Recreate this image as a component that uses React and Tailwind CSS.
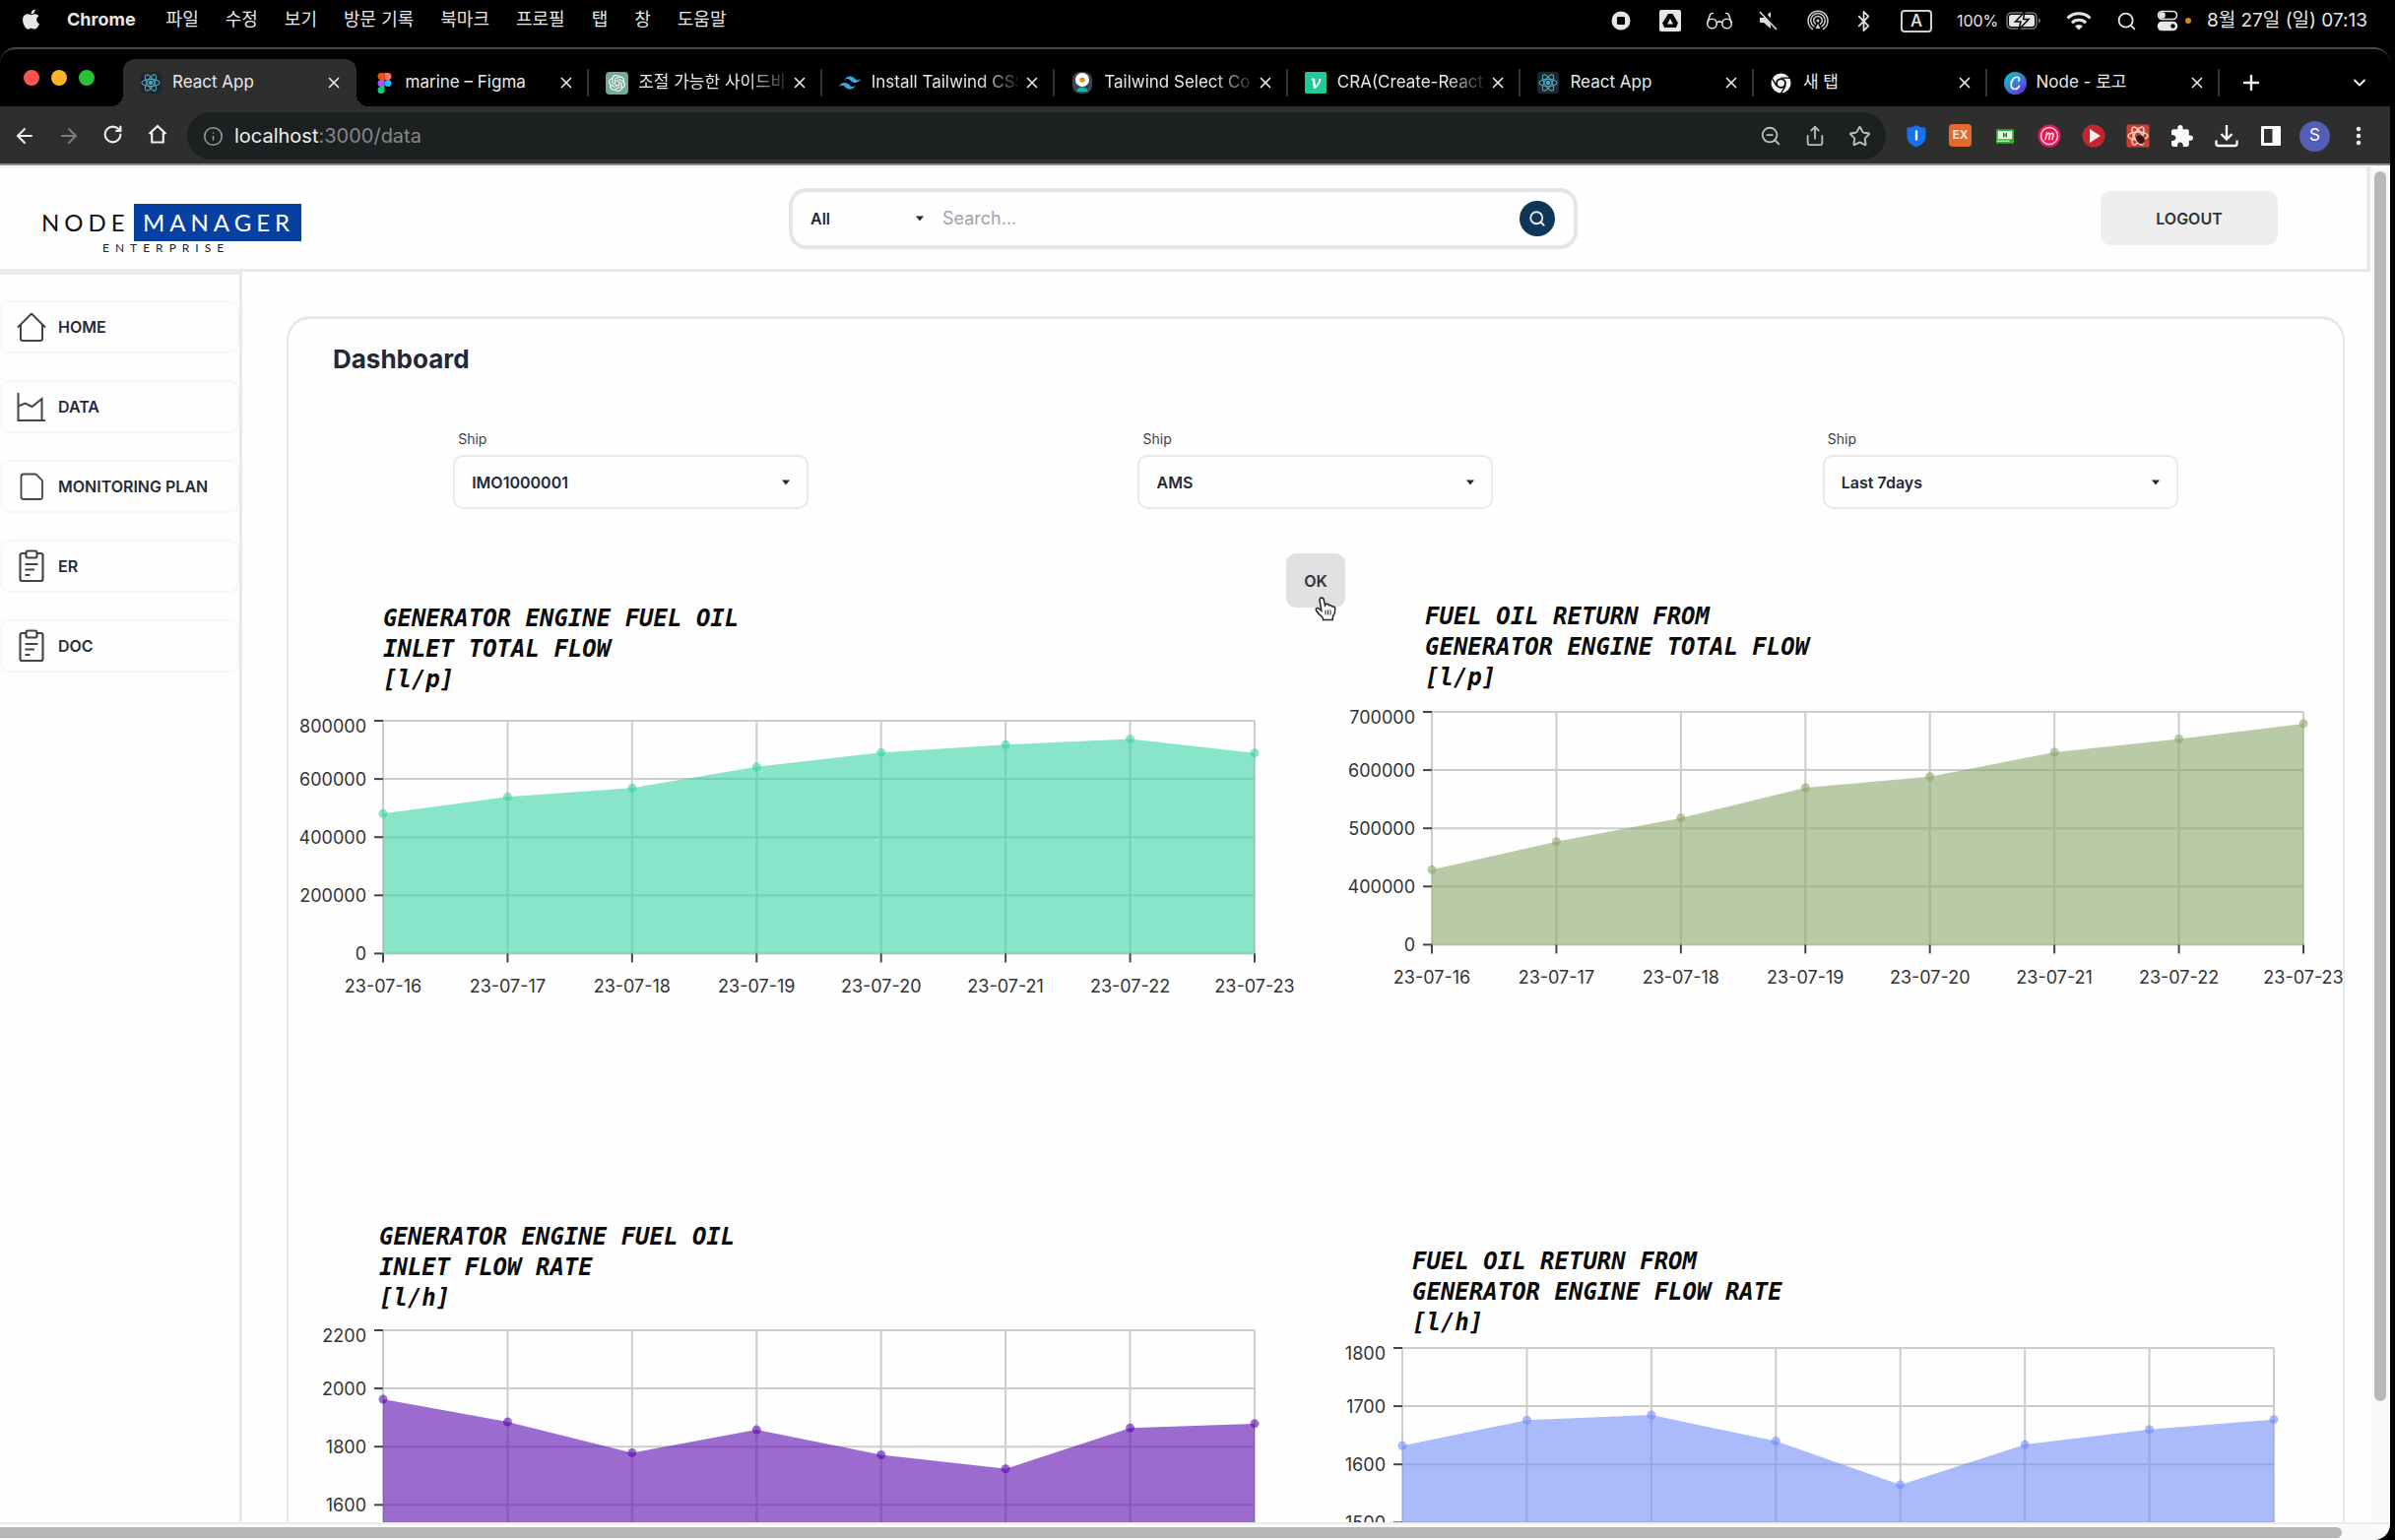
import React from "react";
import {
  ArrowLeft, ArrowRight, Bluetooth, ChevronDown, EllipsisVertical, Info,
  Plus, RotateCw, Search, Share, Star, X, ZoomOut,
} from "lucide-react";
import { FaApple } from "react-icons/fa";
import { SiOpenai, SiTailwindcss } from "react-icons/si";
import { MdExtension } from "react-icons/md";

const MENUS = ["파일", "수정", "보기", "방문 기록", "북마크", "프로필", "탭", "창", "도움말"];

const DATES = ["23-07-16", "23-07-17", "23-07-18", "23-07-19", "23-07-20", "23-07-21", "23-07-22", "23-07-23"];

/* ---------- favicons ---------- */

function ReactIcon() {
  return (
    <svg viewBox="0 0 24 24" className="size-[22px] rounded-sm bg-[#20262c]" fill="none" stroke="#4fa3bd" strokeWidth="1.2">
      <circle cx="12" cy="12" r="1.8" fill="#4fa3bd" />
      <ellipse cx="12" cy="12" rx="10" ry="4" />
      <ellipse cx="12" cy="12" rx="10" ry="4" transform="rotate(60 12 12)" />
      <ellipse cx="12" cy="12" rx="10" ry="4" transform="rotate(120 12 12)" />
    </svg>
  );
}

function FigmaIcon() {
  return (
    <svg viewBox="0 0 22 22" className="size-[22px]">
      <path d="M8 1h3.500v7H8a3.500 3.500 0 0 1 0-7z" fill="#f24e1e" />
      <path d="M11.500 1H15a3.500 3.500 0 0 1 0 7h-3.500z" fill="#ff7262" />
      <path d="M8 8h3.500v7H8a3.500 3.500 0 0 1 0-7z" fill="#a259ff" />
      <circle cx="15" cy="11.500" r="3.500" fill="#1abcfe" />
      <path d="M8 15h3.500v3.500A3.500 3.500 0 1 1 8 15z" fill="#0acf83" />
    </svg>
  );
}

function OpenAiIcon() {
  return (
    <span className="flex size-[23px] items-center justify-center rounded bg-[#75a99c] text-white">
      <SiOpenai size={17} />
    </span>
  );
}

function PenguinIcon() {
  return (
    <svg viewBox="0 0 22 24" className="h-6 w-[22px]">
      <rect x="1" y="1" width="20" height="22" rx="8" fill="#3a4656" />
      <circle cx="11" cy="9" r="7" fill="#fff" />
      <circle cx="11" cy="9" r="2.600" fill="#e28a1c" />
      <path d="M5.500 21c0-6 11-6 11 0z" fill="#14b8a6" />
    </svg>
  );
}

function VelogIcon() {
  return (
    <svg viewBox="0 0 22 22" className="size-[22px]">
      <rect width="22" height="22" rx="2" fill="#20c997" />
      <path d="M7 6.500h3l1 8c2-2.500 3.300-4.800 3-6.800l2-1.200c1.200 3-2 7-5.200 10.500H9L7.800 8.500H6.500z" fill="#fff" />
    </svg>
  );
}

function ChromeIcon() {
  return (
    <svg viewBox="0 0 22 22" className="size-[21px]">
      <circle cx="11" cy="11" r="10.500" fill="#f4f4f4" />
      <circle cx="11" cy="11" r="5.600" fill="#000" />
      <path d="M11 5.400h9.500M6.200 13.800 1.500 5.800M15.800 13.800l-4.800 8" stroke="#000" strokeWidth="1.400" />
      <circle cx="11" cy="11" r="3.700" fill="#f4f4f4" />
    </svg>
  );
}

function CanvaIcon() {
  return (
    <svg viewBox="0 0 24 24" className="size-[23px]">
      <defs>
        <linearGradient id="canva" x1="0.100" y1="0.200" x2="0.800" y2="1">
          <stop offset="0" stopColor="#12b8c4" />
          <stop offset="0.550" stopColor="#3f74da" />
          <stop offset="1" stopColor="#6a22dd" />
        </linearGradient>
      </defs>
      <circle cx="12" cy="12" r="12" fill="url(#canva)" />
      <path d="M15.500 9.500c1.500-2 .3-4-1.800-4C10 5.500 7.500 9.500 7.500 13.300c0 3 1.500 5 4 5 2 0 3.700-1.300 4.700-3.300" fill="none" stroke="#fff" strokeWidth="1.700" strokeLinecap="round" />
    </svg>
  );
}

const TABS = [
  { title: "React App", icon: <ReactIcon />, active: true },
  { title: "marine – Figma", icon: <FigmaIcon /> },
  { title: "조절 가능한 사이드바", icon: <OpenAiIcon />, fade: true },
  { title: "Install Tailwind CSS", icon: <SiTailwindcss size={22} color="#38a8e0" />, fade: true },
  { title: "Tailwind Select Co", icon: <PenguinIcon />, fade: true },
  { title: "CRA(Create-React", icon: <VelogIcon />, fade: true },
  { title: "React App", icon: <ReactIcon /> },
  { title: "새 탭", icon: <ChromeIcon /> },
  { title: "Node - 로고", icon: <CanvaIcon /> },
];

/* ---------- system menu bar ---------- */

function MenuBar() {
  return (
    <header className="flex h-12 shrink-0 items-start bg-black text-[18px] leading-10 text-[#e6e6e6]">
      <FaApple size={23} className="mt-2 ml-5" />
      <nav className="ml-[25px] flex gap-[27px]">
        <span className="mr-1 font-bold">Chrome</span>
        {MENUS.map((m) => <span key={m}>{m}</span>)}
      </nav>
      <div className="ml-auto flex h-[42px] items-center">
        <span className="flex w-[50px] justify-center">
          <svg viewBox="0 0 20 20" className="size-5"><circle cx="10" cy="10" r="9.500" fill="#e6e6e6" /><rect x="6" y="6" width="8" height="8" rx="1" fill="#000" /></svg>
        </span>
        <span className="flex w-[50px] justify-center">
          <svg viewBox="0 0 24 24" className="size-6"><rect x="1" y="1" width="22" height="22" rx="2" fill="#e6e6e6" /><path d="M10 5h4.500l5.500 9.500-2.200 4.500H6.200L4 14.500z" fill="#000" /><path d="m12 10 3 5.500H9z" fill="#e6e6e6" /></svg>
        </span>
        <span className="flex w-[50px] justify-center">
          <svg viewBox="0 0 28 20" className="h-5 w-7" fill="none" stroke="#dcdcdc" strokeWidth="1.600" strokeLinecap="round">
            <circle cx="6.500" cy="13" r="4.800" /><circle cx="21.500" cy="13" r="4.800" />
            <path d="M11.300 12c1.500-1.300 3.900-1.300 5.400 0M2 11.500 4.500 4q.7-1.800 2.800-1.500M26 11.500 23.500 4q-.7-1.800-2.800-1.500" />
          </svg>
        </span>
        <span className="flex w-[50px] justify-center">
          <svg viewBox="0 0 22 22" className="size-[22px]"><path d="M2 8h4l7-6v17l-7-6H2z" fill="#dcdcdc" /><path d="m4 1 16 19" stroke="#000" strokeWidth="4" /><path d="m2 2 17 18" stroke="#dcdcdc" strokeWidth="1.600" /></svg>
        </span>
        <span className="flex w-[50px] justify-center">
          <svg viewBox="0 0 24 24" className="size-6" fill="none" stroke="#cfcfcf" strokeWidth="1.500" strokeLinecap="round">
            <path d="M6.500 20.500a10 10 0 1 1 11 0M8 17.800a7.300 7.300 0 1 1 8 0M9.500 15.200a4.300 4.300 0 1 1 5 0" />
            <circle cx="12" cy="12" r="1.500" fill="#cfcfcf" stroke="none" />
            <path d="m12 15 2.500 5h-5z" fill="#cfcfcf" stroke="none" />
          </svg>
        </span>
        <span className="flex w-11 justify-center"><Bluetooth size={23} strokeWidth={1.8} /></span>
        <span className="flex w-[62px] justify-center">
          <span className="flex h-[23px] w-8 items-center justify-center rounded-[4px] border-2 border-[#cfcfcf] text-[17px] leading-none font-medium">A</span>
        </span>
        <span className="ml-2.5 w-[50px] text-[16px]">100%</span>
        <svg viewBox="0 0 36 18" className="h-[18px] w-9">
          <rect x="1" y="1" width="30" height="16" rx="4.500" fill="none" stroke="#777" strokeWidth="1.500" />
          <rect x="3" y="3" width="26" height="12" rx="2.500" fill="#e6e6e6" />
          <path d="M33 6.500v5q2-.8 2-2.500t-2-2.500z" fill="#777" />
          <path d="M19 0 9.500 10H15l-2 8 10-10.500h-5.500z" fill="#e6e6e6" stroke="#000" strokeWidth="1.500" />
        </svg>
        <span className="flex w-[76px] justify-center">
          <svg viewBox="0 0 26 20" className="h-5 w-[26px]" fill="none" stroke="#e6e6e6" strokeWidth="3">
            <path d="M1.500 7.500a16.500 16.500 0 0 1 23 0M6 12.200a10 10 0 0 1 14 0" />
            <path d="M9 15.500a5.800 5.800 0 0 1 8 0L13 19.500z" fill="#e6e6e6" stroke="none" />
          </svg>
        </span>
        <Search size={21} strokeWidth={2} />
        <svg viewBox="0 0 22 22" className="ml-5 size-[22px]" fill="none" stroke="#e6e6e6" strokeWidth="1.600">
          <rect x="1.500" y="1.500" width="19" height="8" rx="4" /><circle cx="5.500" cy="5.500" r="2.500" fill="#e6e6e6" />
          <rect x="1.500" y="12.500" width="19" height="8" rx="4" fill="#e6e6e6" /><circle cx="16.500" cy="16.500" r="2.200" fill="#000" stroke="none" />
        </svg>
        <span className="ml-[7px] size-1.5 rounded-full bg-[#d8841c]" />
        <time className="mr-7 ml-4 text-right text-[19px]">8월 27일 (일) 07:13</time>
      </div>
    </header>
  );
}

/* ---------- browser chrome ---------- */

function TabStrip() {
  return (
    <div className="flex h-[58px] items-end">
      <div className="flex w-[125px] shrink-0 gap-3 self-start pt-[21px] pl-6">
        <span className="size-4 rounded-full bg-[#ff554d]" />
        <span className="size-4 rounded-full bg-[#fdb429]" />
        <span className="size-4 rounded-full bg-[#28c232]" />
      </div>
      {TABS.map((t, i) => (
        <div
          key={i}
          className={
            "relative flex h-12 min-w-0 flex-1 items-center pr-3.5 pl-[17px] text-[17px] text-[#e8e8e8] " +
            (t.active ? "rounded-t-xl bg-[#2e2e2e]" : "")
          }
        >
          {t.active && (
            <>
              <span className="absolute bottom-0 -left-3 h-3 w-3 bg-[radial-gradient(circle_at_0_0,transparent_12px,#2e2e2e_12px)]" />
              <span className="absolute -right-3 bottom-0 h-3 w-3 bg-[radial-gradient(circle_at_100%_0,transparent_12px,#2e2e2e_12px)]" />
            </>
          )}
          <span className="flex w-6 shrink-0 items-center">{t.icon}</span>
          <span
            className={
              "ml-[9px] min-w-0 flex-1 overflow-hidden whitespace-nowrap " +
              (t.fade ? "[mask-image:linear-gradient(to_right,black_75%,transparent_105%)]" : "")
            }
          >
            {t.title}
          </span>
          <button type="button" aria-label="Close tab" className="ml-1.5"><X size={18} strokeWidth={2.2} /></button>
          {i > 0 && <span className="absolute top-2.5 right-0 h-7 w-0.5 bg-[#333]" />}
        </div>
      ))}
      <div className="flex h-12 w-[173px] shrink-0 items-center justify-between pr-[21px] pl-5 text-[#eee]">
        <button type="button" aria-label="New tab"><Plus size={24} strokeWidth={2.4} /></button>
        <button type="button" aria-label="Search tabs"><ChevronDown size={20} strokeWidth={2.4} /></button>
      </div>
    </div>
  );
}

function Extensions() {
  return (
    <div className="flex">
      <span className="flex w-[45px] justify-center">
        <svg viewBox="0 0 22 24" className="h-6 w-[22px]"><path d="M11 1c3 2 6 2.500 9.500 2.500V13c0 5-4 8-9.500 10.500C5.500 21 1.500 18 1.500 13V3.500C5 3.500 8 3 11 1z" fill="#1571ee" /><rect x="9.800" y="6.500" width="2.400" height="10" fill="#fff" /></svg>
      </span>
      <span className="flex w-[45px] justify-center">
        <span className="flex size-[23px] items-center justify-center rounded bg-[#e8682a] text-[12px] font-bold text-[#f6e3d8]">EX</span>
      </span>
      <span className="flex w-[45px] items-center justify-center">
        <svg viewBox="0 0 20 16" className="h-[15px] w-[18px]"><rect width="20" height="16" rx="1" fill="#2cb52c" /><rect x="2" y="2" width="16" height="9" fill="#e9f8e4" /><path d="M8.500 4v5M11.500 4v5M8 6.500h4" stroke="#1c7a1c" strokeWidth="1.500" /><rect x="1" y="12.500" width="14" height="1.500" fill="#b8f0b0" /></svg>
      </span>
      <span className="flex w-[45px] justify-center">
        <svg viewBox="0 0 24 24" className="size-6"><circle cx="12" cy="12" r="11.500" fill="#ea1650" /><circle cx="12" cy="12" r="8.500" fill="none" stroke="#ffd5e0" strokeWidth="1.500" /><path d="M8 15.500 9.500 9M9 11.500c1.500-3 4-2.500 3.500 0l-.8 4M12.500 11c1.500-2.500 4-2 3.500.5l-1 4" fill="none" stroke="#ffd5e0" strokeWidth="1.700" strokeLinecap="round" /></svg>
      </span>
      <span className="flex w-[45px] justify-center">
        <svg viewBox="0 0 24 24" className="size-6"><circle cx="12" cy="12" r="11.500" fill="#c5252d" /><path d="M8 5v14l11-7z" fill="#fbeaea" /></svg>
      </span>
      <span className="flex w-[45px] justify-center">
        <svg viewBox="0 0 24 24" className="size-6" fill="none" stroke="#f0d0ca" strokeWidth="1.500">
          <rect x="0.500" y="0.500" width="23" height="23" rx="1.500" fill="#c8402f" stroke="none" />
          <ellipse cx="12" cy="12" rx="10" ry="4" /><ellipse cx="12" cy="12" rx="10" ry="4" transform="rotate(60 12 12)" /><ellipse cx="12" cy="12" rx="10" ry="4" transform="rotate(120 12 12)" />
          <ellipse cx="14.500" cy="15.500" rx="4" ry="5" transform="rotate(-40 14.500 15.500)" fill="#3a1714" stroke="none" />
        </svg>
      </span>
      <span className="flex w-[45px] justify-center"><MdExtension size={25} color="#fafafa" /></span>
      <span className="flex w-[45px] justify-center">
        <svg viewBox="0 0 24 24" className="size-6" fill="none" stroke="#fafafa" strokeWidth="2.300"><path d="M12 1v14M6.500 10 12 15.500 17.500 10M1.500 16.500V20q0 2 2 2h17q2 0 2-2v-3.500" /></svg>
      </span>
      <span className="flex w-[45px] items-center justify-center">
        <svg viewBox="0 0 22 22" className="size-[22px]"><rect x="1" y="1" width="20" height="20" rx="1" fill="#fafafa" /><rect x="4" y="4" width="8.500" height="14" fill="#2e2e2e" /></svg>
      </span>
    </div>
  );
}

function Toolbar() {
  return (
    <div className="flex h-[60px] items-center border-b-2 border-[#8a8a8a] bg-[#2e2e2e] pt-0.5 text-[#eee]">
      <div className="flex shrink-0 pl-[2px]">
        <button type="button" aria-label="Back" className="flex w-[45px] justify-center"><ArrowLeft size={24} strokeWidth={2} /></button>
        <button type="button" aria-label="Forward" className="flex w-[45px] justify-center text-[#7c7c7c]"><ArrowRight size={24} strokeWidth={2} /></button>
        <button type="button" aria-label="Reload" className="flex w-[45px] justify-center"><RotateCw size={21} strokeWidth={2.4} /></button>
        <button type="button" aria-label="Home" className="flex w-[45px] justify-center">
          <svg viewBox="0 0 20 20" className="size-5" fill="none" stroke="currentColor" strokeWidth="2.200"><path d="M1.500 10 10 2l8.500 8M4.200 8.500v10h11.600v-10" /></svg>
        </button>
      </div>
      <div className="ml-2 flex h-12 min-w-0 flex-1 items-center rounded-full bg-[#1d2021] pr-[15px] pl-4">
        <Info size={21} strokeWidth={1.8} className="text-[#9a9a9a]" />
        <span className="ml-[11px] flex-1 text-[20px]"><span>localhost</span><span className="text-[#858789]">:3000/data</span></span>
        <div className="flex items-center gap-[23px] text-[#bcbcbc]">
          <ZoomOut size={22} strokeWidth={2} /><Share size={22} strokeWidth={2} /><Star size={23} strokeWidth={2} />
        </div>
      </div>
      <div className="flex shrink-0 items-center pl-2">
        <Extensions />
        <span className="ml-[7px] flex size-[31px] items-center justify-center rounded-full bg-[#525eb8] text-[17px] text-white">S</span>
        <button type="button" aria-label="Menu" className="mr-5 ml-[17px]"><EllipsisVertical size={24} strokeWidth={2.6} /></button>
      </div>
    </div>
  );
}

/* ---------- application ---------- */

function Caret() {
  return <svg viewBox="0 0 8 6" className="h-1.5 w-2"><path d="M0 .5h8L4 5.500z" fill="#1f2937" /></svg>;
}

function AppHeader() {
  return (
    <div className="mt-px flex h-[107px] shrink-0 items-center border-t border-r-4 border-b-3 border-[#e9e9ea]">
      <div className="flex flex-1">
        <a href="#home" className="mt-[22px] ml-[42px] block">
          <svg viewBox="0 0 266 52" className="h-[52px] w-[266px]" fontFamily="Lato, sans-serif">
            <rect x="94" y="0" width="170" height="38" fill="#0540a2" />
            <text x="0" y="28" fontSize="24" fill="#111" letterSpacing="5">NODE</text>
            <text x="103" y="28" fontSize="24" fill="#fff" letterSpacing="5">MANAGER</text>
            <text x="62" y="49" fontSize="12" fill="#222" letterSpacing="6">ENTERPRISE</text>
          </svg>
        </a>
      </div>
      <form className="flex h-[62px] w-1/3 max-w-[802px] items-center rounded-[18px] border-4 border-[#e2e5e9]" onSubmit={(e) => e.preventDefault()}>
        <div className="relative w-[133px]">
          <select aria-label="Category" defaultValue="All" className="w-full appearance-none pl-[18px] text-[16px] font-semibold text-[#1f2937]">
            <option>All</option>
          </select>
          <span className="pointer-events-none absolute inset-y-0 right-0 flex items-center"><Caret /></span>
        </div>
        <input aria-label="Search" placeholder="Search..." className="ml-[19px] min-w-0 flex-1 text-[18px] text-gray-700 placeholder:text-[#9ea3ad]" />
        <button type="submit" aria-label="Submit search" className="mr-[19px] flex size-9 items-center justify-center rounded-full bg-[#0f3557] text-[#e4eef6]">
          <Search size={18} strokeWidth={2.4} />
        </button>
      </form>
      <div className="flex flex-1 justify-end">
        <button type="button" className="mr-[90px] h-[55px] w-[180px] rounded-[10px] bg-[#eeeeee] text-[16px] font-semibold text-[#2b3440]">LOGOUT</button>
      </div>
    </div>
  );
}

function ClipboardIcon() {
  return (
    <svg viewBox="0 0 30 34" className="h-[34px] w-[30px]" fill="none" stroke="#444" strokeWidth="2.200">
      <path d="M9 4H5.500Q3.500 4 3.500 6v24q0 2 2 2h19q2 0 2-2V6q0-2-2-2H21" />
      <rect x="9.500" y="1.500" width="11" height="7" rx="2" />
      <path d="M8.500 15h13M8.500 20.500h9.500M8.500 26h5" />
    </svg>
  );
}

const NAV = [
  {
    label: "HOME",
    icon: (
      <svg viewBox="0 0 30 34" className="h-[34px] w-[30px]" fill="none" stroke="#444" strokeWidth="2" strokeLinejoin="round">
        <path d="M1 17.500 15 3.500l14 14M4 15v14q0 2 2 2h18q2 0 2-2V15" />
      </svg>
    ),
  },
  {
    label: "DATA",
    icon: (
      <svg viewBox="0 0 30 34" className="h-[34px] w-[30px]" fill="none" stroke="#444" strokeWidth="2">
        <path d="M1.500 3v28H29M25.500 31V9L15.500 17 8.500 13.500 1.500 16.500" />
      </svg>
    ),
  },
  {
    label: "MONITORING PLAN",
    icon: (
      <svg viewBox="0 0 30 34" className="h-[34px] w-[30px]" fill="none" stroke="#444" strokeWidth="1.800">
        <path d="M7 4.500h11.500q1 0 1.800.8l5 5q.7.8.7 1.700v15.500q0 2.500-2.500 2.500H7q-2.500 0-2.500-2.500V7Q4.500 4.500 7 4.500z" />
      </svg>
    ),
  },
  { label: "ER", icon: <ClipboardIcon /> },
  { label: "DOC", icon: <ClipboardIcon /> },
];

function Sidebar() {
  return (
    <aside className="w-[246px] shrink-0 border-t-3 border-r-3 border-[#e9e9ea] pt-[26px]">
      <nav className="flex flex-col gap-[27px]">
        {NAV.map((n) => (
          <a key={n.label} href={"#" + n.label} className="flex h-[54px] items-center gap-3 rounded-[10px] border-2 border-[#f7f7f7] pl-[15px] text-[16px] font-semibold whitespace-nowrap text-[#252b38]">
            {n.icon}
            {n.label}
          </a>
        ))}
      </nav>
    </aside>
  );
}

function Filter({ id, value }) {
  return (
    <div className="mx-auto w-[361px] max-w-full">
      <label htmlFor={id} className="block pl-[5px] text-[14px] leading-5 text-[#3a414d]">Ship</label>
      <div className="relative mt-1.5">
        <select id={id} defaultValue={value} className="h-[55px] w-full appearance-none rounded-[10px] border-2 border-[#e9e9ea] px-[17px] text-[16px] font-semibold text-[#1f2937]">
          <option>{value}</option>
        </select>
        <span className="pointer-events-none absolute inset-y-0 right-[19px] flex items-center"><Caret /></span>
      </div>
    </div>
  );
}

const STEP = 59.1;
const PLOT = 885;

const CHARTS = [
  {
    title: ["GENERATOR ENGINE FUEL OIL", "INLET TOTAL FLOW", "[l/p]"],
    cell: "pt-0.5", head: "pl-24", left: 96, top: 26, max: 800000, unit: 200000,
    ticks: ["800000", "600000", "400000", "200000", "0"],
    color: "#39d4a7",
    data: [480700, 538300, 568800, 641500, 690600, 717700, 737000, 689000],
  },
  {
    title: ["FUEL OIL RETURN FROM", "GENERATOR ENGINE TOTAL FLOW", "[l/p]"],
    cell: "", head: "pl-[111px]", left: 118, top: 19, max: 700000, unit: 100000,
    ticks: ["700000", "600000", "500000", "400000", "0"],
    color: "#8aa76b",
    data: [428900, 477000, 517600, 569700, 588700, 630600, 653500, 679700],
  },
  {
    title: ["GENERATOR ENGINE FUEL OIL", "INLET FLOW RATE", "[l/h]"],
    cell: "", head: "pl-[92px]", left: 96, top: 17, max: 2200, unit: 200,
    ticks: ["2200", "2000", "1800", "1600", "0"],
    color: "#5808af",
    data: [1963, 1885, 1779, 1858, 1772, 1724, 1864, 1879],
  },
  {
    title: ["FUEL OIL RETURN FROM", "GENERATOR ENGINE FLOW RATE", "[l/h]"],
    cell: "pt-[25px]", head: "pl-[98px]", left: 88, top: 10, max: 1800, unit: 100,
    ticks: ["1800", "1700", "1600", "1500", "0"],
    color: "#738cf8",
    data: [1632, 1676, 1685, 1640, 1565, 1634, 1660, 1677],
  },
];

function AreaChart({ left, top, max, unit, ticks, color, data }) {
  const bottom = top + STEP * 4;
  const px = (i) => left + (PLOT / 7) * i;
  const py = (v) => top + ((max - v) / unit) * STEP;
  const line = data.map((v, i) => `${px(i)},${py(v)}`).join(" ");
  return (
    <svg viewBox="0 0 1043 320" className="block w-full overflow-visible" fontFamily="Inter, sans-serif" fontSize="18" fill="#333">
      <g stroke="#cccccc" strokeWidth="2">
        {ticks.map((t, i) => <line key={t} x1={left} x2={left + PLOT} y1={top + STEP * i} y2={top + STEP * i} />)}
        {data.map((_, i) => <line key={i} x1={px(i)} x2={px(i)} y1={top} y2={bottom} />)}
      </g>
      <polygon points={`${left},${bottom} ${line} ${left + PLOT},${bottom}`} fill={color} fillOpacity="0.600" />
      {data.map((v, i) => <circle key={i} cx={px(i)} cy={py(v)} r="4.500" fill={color} fillOpacity="0.600" />)}
      {ticks.map((t, i) => (
        <g key={t}>
          <line x1={left - 9} x2={left} y1={top + STEP * i} y2={top + STEP * i} stroke="#444" strokeWidth="2" />
          <text x={left - 17} y={top + STEP * i + (i === 0 ? 12 : 7)} textAnchor="end">{t}</text>
        </g>
      ))}
      {DATES.map((d, i) => (
        <g key={d}>
          <line x1={px(i)} x2={px(i)} y1={bottom} y2={bottom + 9} stroke="#444" strokeWidth="2" />
          <text x={px(i)} y={bottom + 40} textAnchor="middle">{d}</text>
        </g>
      ))}
    </svg>
  );
}

function Cursor() {
  return (
    <svg viewBox="0 0 24 26" className="absolute top-[43px] left-7 z-10 h-[26px] w-6">
      <path d="M8 2q2 0 2.300 2.200L11.500 10l1-1.500q2-.8 3 1.200 2-.8 3 1.200 3-.4 3.300 2.500 0 5-2.300 7.600l-.3 3.500H9.500L9 22q-4-3-6.500-7-.8-2.300 1.300-2.600 1.500 0 4 2.600L6 4.500Q6 2.300 8 2z" fill="#fff" stroke="#222" strokeWidth="1.500" />
      <path d="M12 14.500v5M14.500 14.500v5M17 14.500v5" stroke="#222" />
    </svg>
  );
}

function Dashboard() {
  return (
    <main className="min-w-0 flex-1 pt-[45px] pr-[26px] pl-[45px]">
      <section className="rounded-t-3xl border-2 border-t-3 border-[#e6e7ec]">
        <h1 className="pt-[25px] pl-[45px] text-[26px] leading-8 font-bold text-[#1f2937]">Dashboard</h1>
        <div className="mt-[55px] grid grid-cols-3">
          <Filter id="ship" value="IMO1000001" />
          <Filter id="system" value="AMS" />
          <Filter id="period" value="Last 7days" />
        </div>
        <div className="relative mx-auto mt-[45px] w-[60px]">
          <button type="button" className="h-[55px] w-full rounded-[10px] bg-[#e0e0e1] text-[16px] font-semibold text-[#2b3440]">OK</button>
          <Cursor />
        </div>
        <div className="-mt-1.5 grid grid-cols-2 gap-y-[215px]">
          {CHARTS.map((c, i) => (
            <article key={i} className={c.cell}>
              <h2 className={"font-['DejaVu_Sans_Mono',monospace] text-[24px] leading-[31px] font-bold text-[#0c0c0c] italic " + c.head}>
                {c.title.map((l) => <span key={l} className="block">{l}</span>)}
              </h2>
              <AreaChart {...c} />
            </article>
          ))}
        </div>
      </section>
    </main>
  );
}

export default function App() {
  return (
    <div className="flex h-screen flex-col overflow-hidden bg-black font-['Inter','Noto_Sans_CJK_KR',sans-serif]">
      <MenuBar />
      <div className="mr-[5px] flex min-h-0 flex-1 flex-col overflow-hidden rounded-t-2xl rounded-br-2xl border-t-2 border-[#484848] bg-black">
        <TabStrip />
        <Toolbar />
        <div className="flex min-h-0 flex-1 bg-[#fefefe]">
          <div className="flex min-w-0 flex-1 flex-col overflow-hidden">
            <AppHeader />
            <div className="flex min-h-0 flex-1 items-stretch overflow-hidden">
              <Sidebar />
              <Dashboard />
            </div>
          </div>
          <div className="flex w-5 shrink-0 flex-col items-center bg-[#fafafa] pt-1.5">
            <span className="h-[91%] w-3 rounded-full bg-[#b8b8b8]" />
          </div>
        </div>
        <div className="h-[18px] shrink-0 border-t-2 border-[#ececec] bg-[#fafafa] pt-[3px]">
          <div className="h-[11px] w-[98%] rounded-r-full bg-[#b6b6b6]" />
        </div>
      </div>
    </div>
  );
}
